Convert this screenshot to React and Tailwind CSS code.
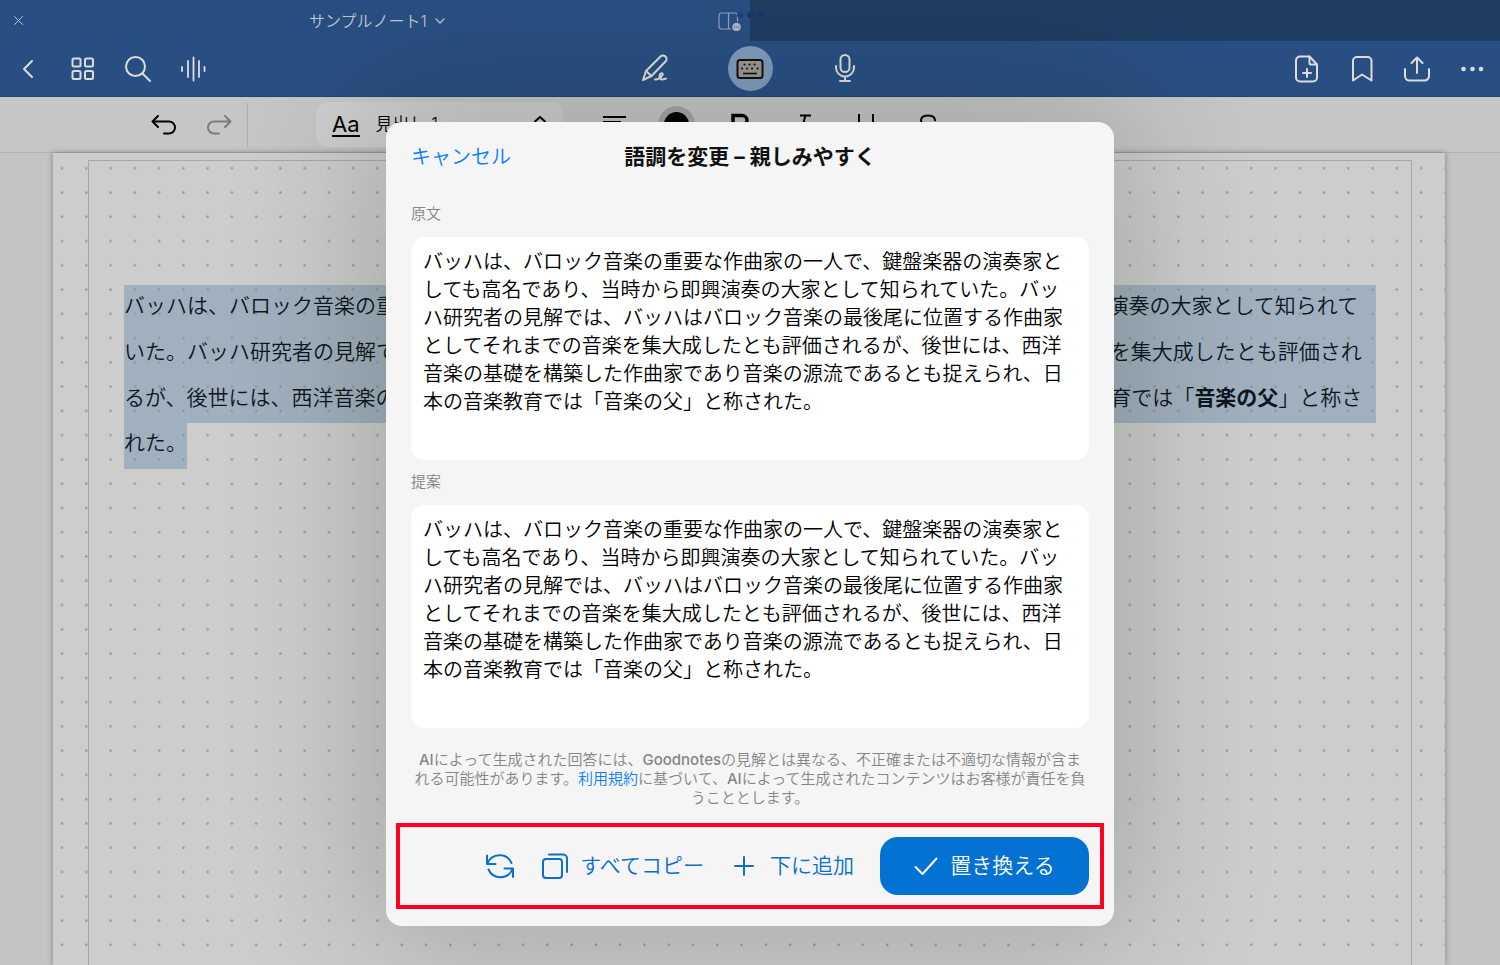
import { useState } from 'react';

const original =
  'バッハは、バロック音楽の重要な作曲家の一人で、鍵盤楽器の演奏家としても高名であり、当時から即興演奏の大家として知られていた。バッハ研究者の見解では、バッハはバロック音楽の最後尾に位置する作曲家としてそれまでの音楽を集大成したとも評価されるが、後世には、西洋音楽の基礎を構築した作曲家であり音楽の源流であるとも捉えられ、日本の音楽教育では「音楽の父」と称された。';

function Icon({ w = 28, h = 28, sw = 2, className = '', children }) {
  return (
    <svg width={w} height={h} viewBox={`0 0 ${w} ${h}`} fill="none" stroke="currentColor" strokeWidth={sw}
      strokeLinecap="round" strokeLinejoin="round" className={`shrink-0 ${className}`} aria-hidden="true">
      {children}
    </svg>
  );
}

function NavButton({ label, children }) {
  return (
    <button type="button" aria-label={label} className="w-[55px] h-11 flex items-center justify-center">
      {children}
    </button>
  );
}

function TabBar() {
  return (
    <div className="relative flex h-[41px] text-[#bcc6d3]">
      <div className="w-1/2 grid grid-cols-[1fr_auto_1fr] items-center pl-3 pr-2">
        <button type="button" aria-label="閉じる" className="justify-self-start">
          <Icon w={13} h={13} sw={1}><path d="M2.5 2.5l8 8M10.5 2.5l-8 8" /></Icon>
        </button>
        <button type="button" className="flex items-center gap-2 text-[16px] leading-6">
          サンプルノート1
          <Icon w={10} h={8} sw={1.4}><path d="M1 2l4 4 4-4" /></Icon>
        </button>
        <button type="button" aria-label="分割表示" className="justify-self-end">
          <Icon w={24} h={20} sw={1.2} className="text-[#8fa3bf]">
            <path d="M19.500 10V4.500A2.500 2.500 0 0 0 17 2H3.500A2.500 2.500 0 0 0 1 4.500v11A2.500 2.500 0 0 0 3.500 18H13M10.500 2v16" />
            <circle cx="18.500" cy="16" r="4.300" fill="#a9b7ca" stroke="none" />
            <path d="M16.500 16h.1M18.500 16h.1M20.500 16h.1" stroke="#294f82" />
          </Icon>
        </button>
      </div>
      <div className="w-1/2 bg-[#203d63]" />
      <div className="absolute left-1/2 top-3 -translate-x-1/2 flex gap-1">
        <span className="size-1.5 rounded-full bg-[#1a4380]" />
        <span className="size-1.5 rounded-full bg-[#19396b]" />
        <span className="size-1.5 rounded-full bg-[#19396b]" />
      </div>
    </div>
  );
}

function NavBar() {
  return (
    <div className="grid grid-cols-[1fr_auto_1fr] items-center h-[56px] border-b border-[#1f4577] text-[#dcdcdc]">
      <div className="flex">
        <NavButton label="戻る"><Icon><path d="M18 6l-8 8 8 8" /></Icon></NavButton>
        <NavButton label="サムネイル">
          <Icon>
            <rect x="3.500" y="3.500" width="8" height="8" rx="1.500" />
            <rect x="16" y="3.500" width="8" height="8" rx="1.500" />
            <rect x="3.500" y="16" width="8" height="8" rx="1.500" />
            <rect x="16" y="16" width="8" height="8" rx="1.500" />
          </Icon>
        </NavButton>
        <NavButton label="検索">
          <Icon><circle cx="11.500" cy="11.500" r="9.500" /><path d="M18.500 18.500l7.500 7.500" /></Icon>
        </NavButton>
        <NavButton label="録音">
          <Icon sw={1.8}><path d="M3 12v4M9 6v16M14.500 2.500v23M20 6v16M25.500 12v4" /></Icon>
        </NavButton>
      </div>
      <div className="flex gap-10">
        <NavButton label="ペン">
          <Icon>
            <path d="M2 26l3-9L19.500 2.500a3.500 3.500 0 0 1 5 0 3.500 3.500 0 0 1 0 5L10.500 22z" />
            <path d="M5 17l5.500 5M14 25.500c2.500 0 6-2 7.500-4.500 1-2-1.500-2.500-2.500-.500-1.500 3 0 5 2 5 1.500 0 2.500-.500 4-1" />
          </Icon>
        </NavButton>
        <button type="button" aria-label="キーボード"
          className="size-[45px] mx-[5px] rounded-full bg-[#7f9bbb] text-[#111] flex items-center justify-center">
          <Icon w={28} h={20}>
            <rect x="1.500" y="1" width="25" height="18" rx="2.500" fill="#9b9691" />
            <path d="M7 14.500h14" strokeLinecap="butt" strokeWidth="1.600" />
            <path d="M8.500 5.500h.1M13.500 5.500h.1M18.500 5.500h.1M6 9.500h.1M11 9.500h.1M16 9.500h.1M21.500 9.500h.1" strokeWidth="2" />
          </Icon>
        </button>
        <NavButton label="マイク">
          <Icon>
            <rect x="9.500" y="1" width="9" height="17" rx="4.500" />
            <path d="M5 12v1.500a9 9 0 0 0 18 0V12M14 22.500V27M9 27h10" />
          </Icon>
        </NavButton>
      </div>
      <div className="flex justify-self-end">
        <NavButton label="ページを追加">
          <Icon>
            <path d="M15.500 1.500H6A4 4 0 0 0 2 5.500v17a4 4 0 0 0 4 4h13a4 4 0 0 0 4-4V9.500z" />
            <path d="M15.500 1.500V8a1.500 1.500 0 0 0 1.500 1.500h6M13 14v8M9 18h8" />
          </Icon>
        </NavButton>
        <NavButton label="ブックマーク">
          <Icon><path d="M4 25.500V6a4 4 0 0 1 4-4h10.500a4 4 0 0 1 4 4v19.500L13 19.500z" /></Icon>
        </NavButton>
        <NavButton label="共有">
          <Icon><path d="M13 18V3M7.500 8L13 2.500 18.500 8M1 14v7a4.500 4.500 0 0 0 4.500 4.500h15A4.500 4.500 0 0 0 25 21v-7" /></Icon>
        </NavButton>
        <NavButton label="その他">
          <Icon>
            <g fill="currentColor" stroke="none">
              <circle cx="4.500" cy="14" r="2.300" /><circle cx="13.500" cy="14" r="2.300" /><circle cx="22" cy="14" r="2.300" />
            </g>
          </Icon>
        </NavButton>
      </div>
    </div>
  );
}

function FormatBar() {
  return (
    <div className="flex items-center h-14 pl-[150px] bg-[#c6c6c6] border-b border-[#b2b2b2] text-black">
      <button type="button" aria-label="元に戻す">
        <Icon><path d="M8 5L2.500 10.500 8 16M3 10.500h16a6 6 0 0 1 0 12h-5" /></Icon>
      </button>
      <button type="button" aria-label="やり直す" className="ml-[27px] text-[#7c7c7c]">
        <Icon><path d="M20 5l5.500 5.500L20 16M25 10.500H9a6 6 0 0 0 0 12h5" /></Icon>
      </button>
      <div className="ml-3.5 w-px h-11 bg-[#adadad]" />
      <button type="button" className="ml-[68px] w-[247px] h-[45px] px-4 rounded-xl bg-[#cecece] flex items-center">
        <span className="text-[22px] leading-[22px] font-normal border-b-2 border-black">Aa</span>
        <span className="ml-4 text-[17px]">見出し 1</span>
        <Icon w={14} h={18} className="ml-auto"><path d="M2 5.500L7 1l5 4.500M2 13l5 4.500 5-4.500" /></Icon>
      </button>
      <div className="ml-[38px] flex items-center gap-[34px]">
        <button type="button" aria-label="行揃え">
          <Icon><path d="M2 6h23M2 11h18M2 17h23M2 22h18" strokeLinecap="butt" /></Icon>
        </button>
        <button type="button" aria-label="文字色" className="size-[37px] -ml-[5px] rounded-full bg-[#a6a6a6] flex items-center justify-center">
          <span className="size-[25px] rounded-full bg-black" />
        </button>
        <button type="button" aria-label="太字">
          <Icon sw={3.5}><path d="M4 4.500h9a5 5 0 0 1 0 10H4zM4 14.500h10a5 5 0 0 1 0 10H4z" strokeLinejoin="miter" /></Icon>
        </button>
        <button type="button" aria-label="斜体">
          <Icon><path d="M9 4.500h11M4 24h10M14.500 4l-5 20" strokeLinecap="butt" /></Icon>
        </button>
        <button type="button" aria-label="下線">
          <Icon><path d="M6 3v11a7 7 0 0 0 14 0V3M5 26h16" strokeLinecap="butt" /></Icon>
        </button>
        <button type="button" aria-label="取り消し線">
          <Icon><path d="M20 9.500c0-3-2-5-7-5s-7 2-7 5 3 4 7 5 7 2 7 5-3 5-7 5-7-2-7-5M3 14.500h20" /></Icon>
        </button>
      </div>
    </div>
  );
}

function NotePage() {
  return (
    <main className="flex-1 pl-[53px] pr-[55px] bg-[#c4c4c4]">
      <div className="relative h-full bg-[#cdcdcd] shadow-[0_0_6px_rgba(0,0,0,0.35)]">
        <svg className="absolute inset-0 size-full" aria-hidden="true">
          <defs>
            <pattern id="dots" x="-3" y="3" width="24.27" height="24.27" patternUnits="userSpaceOnUse">
              <circle cx="12" cy="12.200" r="1.300" fill="#989898" />
            </pattern>
          </defs>
          <rect width="100%" height="100%" fill="url(#dots)" />
        </svg>
        <div className="relative h-full pt-[7px] pl-[35px] pr-[33px]">
          <div className="h-full border border-b-0 border-[#a8a8a8] pt-[124px] px-[35px] text-[21px] text-[#0c1722] whitespace-nowrap">
            <div className="flex flex-col bg-[#7694b0]/50 pb-0.5 leading-[46px]">
              <p className="-mt-0.5">バッハは、バロック音楽の重要な作曲家の一人で、鍵盤楽器の演奏家としても高名であり、当時から即興演奏の大家として知られて</p>
              <p>いた。バッハ研究者の見解では、バッハはバロック音楽の最後尾に位置する作曲家としてそれまでの音楽を集大成したとも評価され</p>
              <p>るが、後世には、西洋音楽の基礎を構築した作曲家であり音楽の源流であるとも捉えられ、日本の音楽教育では「<b>音楽の父</b>」と称さ</p>
            </div>
            <p className="w-fit bg-[#7694b0]/50 pb-1.5 leading-10">れた。</p>
          </div>
        </div>
      </div>
    </main>
  );
}

function TextPanel({ id, label, value, onChange }) {
  return (
    <div className="mt-[10px]">
      <label htmlFor={id} className="block text-[15px] leading-6 text-[#858585]">{label}</label>
      <textarea id={id} value={value} readOnly={!onChange} onChange={onChange}
        className="block mt-[11px] w-full h-[223px] px-3 py-[11px] rounded-[14px] bg-white text-[20px] leading-7 text-black resize-none overflow-hidden outline-none" />
    </div>
  );
}

function ToneDialog() {
  const [suggestion, setSuggestion] = useState(original);

  return (
    <div role="dialog" aria-labelledby="tone-title"
      className="w-[728px] pb-[17px] rounded-2xl bg-[#f5f5f5] shadow-[0_0_140px_20px_rgba(15,30,5,0.2)]">
      <div className="px-[25px]">
        <div className="grid grid-cols-[1fr_auto_1fr] items-center h-[70px]">
          <button type="button" className="justify-self-start text-[20px] text-[#0a7cff]">キャンセル</button>
          <h1 id="tone-title" className="text-[21px] font-bold text-[#111]">語調を変更 – 親しみやすく</h1>
        </div>
        <TextPanel id="original" label="原文" value={original} />
        <TextPanel id="suggestion" label="提案" value={suggestion} onChange={(e) => setSuggestion(e.target.value)} />
        <p className="mt-[22px] text-[15px] leading-[19px] text-center text-[#858585] whitespace-nowrap">
          <span className="font-medium">AI</span>によって生成された回答には、<span className="font-medium">Goodnotes</span>の見解とは異なる、不正確または不適切な情報が含ま<br />
          れる可能性があります。<a href="#terms" className="text-[#0a7cff]">利用規約</a>に基づいて、<span className="font-medium">AI</span>によって生成されたコンテンツはお客様が責任を負<br />
          うこととします。
        </p>
      </div>
      <div className="mt-4 mx-[10px] py-[10px] pr-[11px] border-4 border-[#ff0020] flex items-center justify-end gap-[26px] text-[21px] text-[#0a6fd0]">
        <button type="button" aria-label="再生成" className="mr-0.5">
          <Icon>
            <path d="M1 3.500v8.500h8.500M1.500 11.500A13 13 0 0 1 25.500 11M27 25v-8.500h-8.500M26.500 17A13 13 0 0 1 2.500 17.500" />
          </Icon>
        </button>
        <button type="button" className="mr-1 flex items-center gap-3">
          <Icon w={26} h={26}>
            <rect x="1" y="6" width="19" height="19" rx="3" />
            <path d="M7 1.500h14a4 4 0 0 1 4 4V19" />
          </Icon>
          すべてコピー
        </button>
        <button type="button" className="flex items-center gap-4">
          <Icon w={20} h={20}><path d="M10 1v18M1 10h18" /></Icon>
          下に追加
        </button>
        <button type="button" className="w-[209px] h-[58px] rounded-[18px] bg-[#0372d3] text-white flex items-center justify-center gap-3">
          <Icon w={24} h={20}><path d="M1.500 11l7 7L22.500 2.500" /></Icon>
          置き換える
        </button>
      </div>
    </div>
  );
}

export default function App() {
  return (
    <div lang="ja" className="relative h-screen overflow-hidden flex flex-col font-['Inter','Noto_Sans_CJK_JP',sans-serif] font-[350]">
      <header className="bg-[#294f82]">
        <TabBar />
        <NavBar />
      </header>
      <FormatBar />
      <NotePage />
      <div className="absolute inset-0 flex justify-center items-start pt-[122px]">
        <ToneDialog />
      </div>
    </div>
  );
}
